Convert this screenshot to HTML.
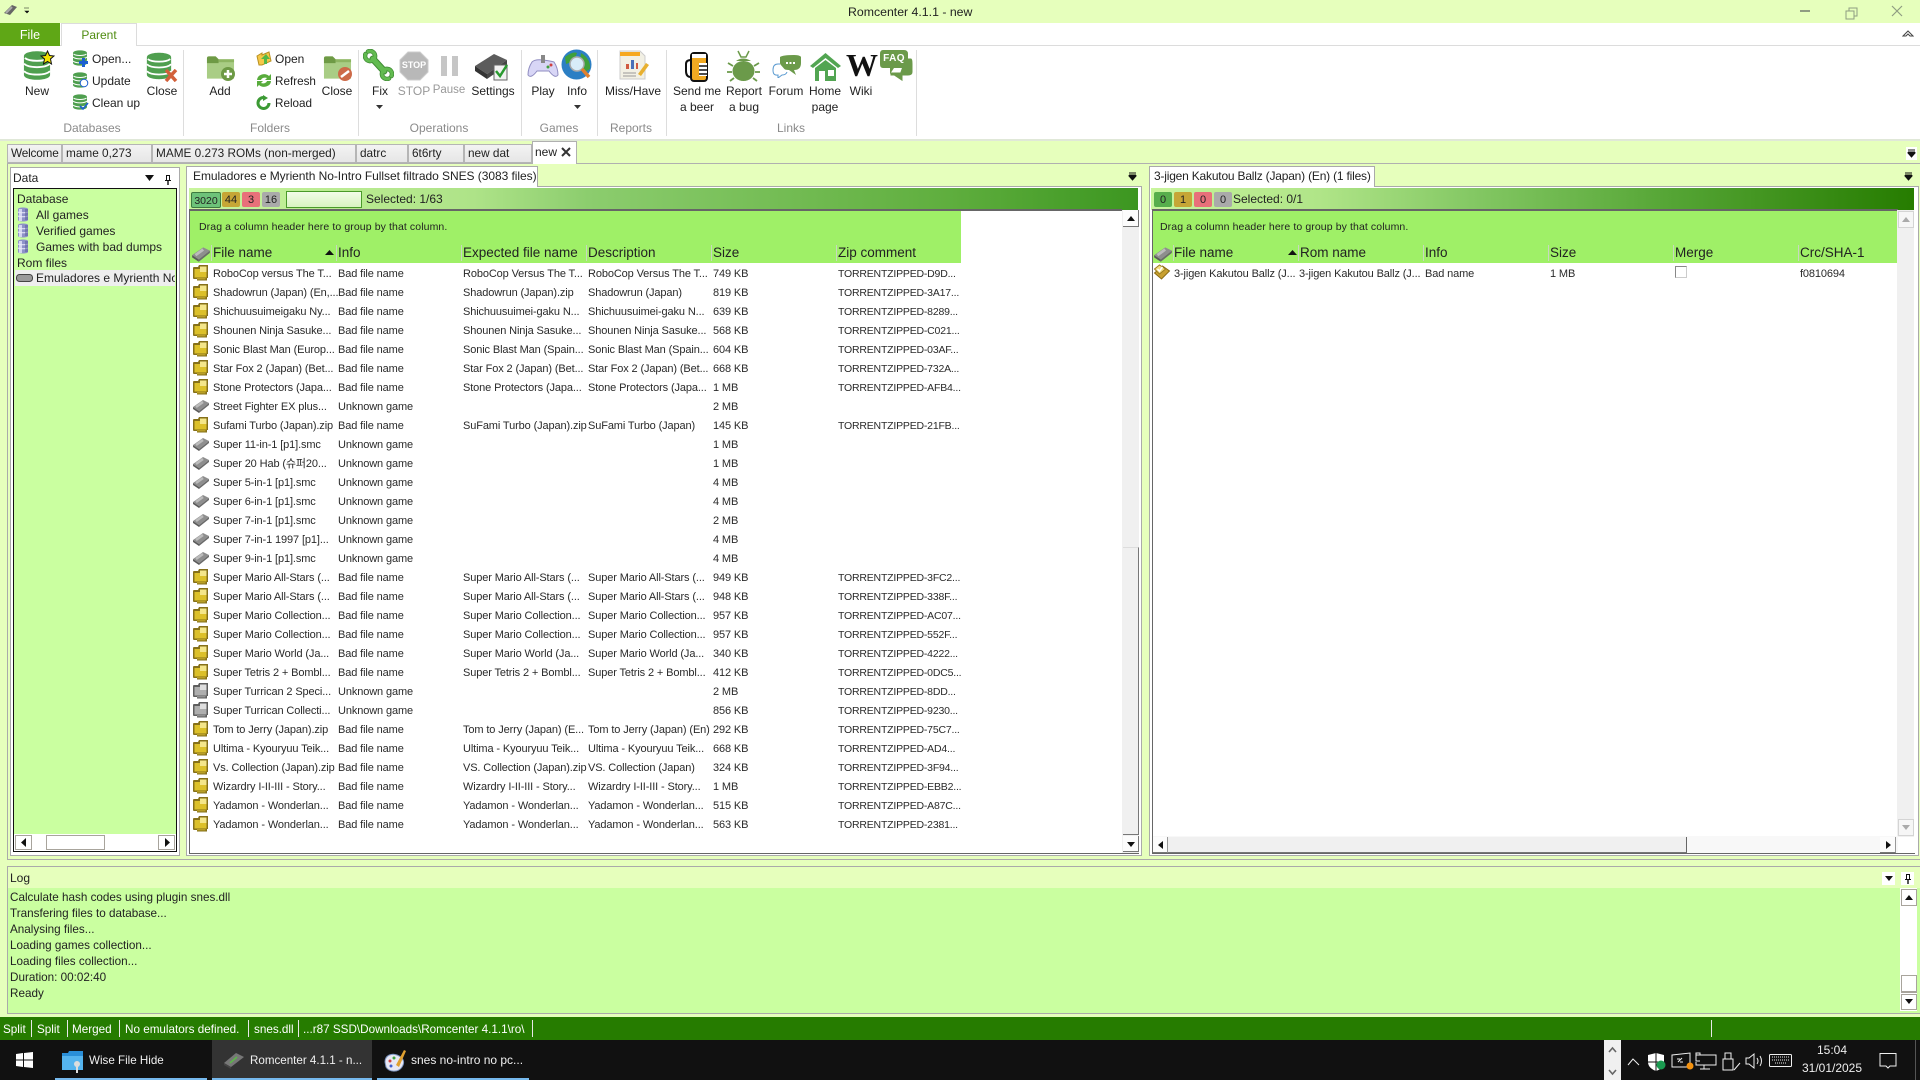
<!DOCTYPE html>
<html><head><meta charset="utf-8"><title>Romcenter 4.1.1 - new</title>
<style>
html,body{margin:0;padding:0;width:1920px;height:1080px;overflow:hidden;background:#e6ffbc}
body{position:relative;font:12px "Liberation Sans","Noto Sans CJK KR",sans-serif;color:#222}
div,span,svg{position:absolute}
.t{white-space:nowrap;line-height:16px;height:16px}
.c{white-space:nowrap;line-height:16px;height:16px;text-align:center}
.g{color:#8a8a8a;font-size:13px}
.sep{width:1px;background:#ddd;top:50px;height:86px}
.r{left:190px;width:770px;height:19px;font-size:11px;letter-spacing:-.12px;color:#2a2a2a}
.r span{top:3px;line-height:16px;white-space:nowrap}
.r svg{left:2px;top:1px;width:18px;height:18px}
.a{left:23px}.b{left:148px}.d{left:273px}.e{left:398px}.h{left:523px}.z{left:648px;font-size:10.5px;letter-spacing:-.2px}
.hd{top:243px;height:20px;background:#9ff067;font-size:13.5px;line-height:19px;white-space:nowrap;color:#222}
.v{width:1px;top:245px;height:16px;background:#c8d8c0}
.tab{top:144px;height:19px;background:linear-gradient(#f3f3f3,#e6e6e6);border:1px solid #b5b5b5;line-height:17px;font-size:11.8px;white-space:nowrap;box-sizing:border-box;padding-left:3px;overflow:hidden}
.bd{top:192px;height:15px;text-align:center;font-size:11px;line-height:17px;color:#222;border-radius:2px}
.sb{background:#fff;border:1px solid #a8a49c;box-sizing:border-box}
.s{color:#fff;top:1022px;font-size:11.7px}
.dv{width:1px;background:#e8e8e8;top:1020px;height:17px}
.tb{color:#f0f0f0;top:1053px;font-size:11.6px}
.tray{fill:none;stroke:#f0f0f0;stroke-width:1}
.lg{font-size:11.7px;left:10px}
</style></head><body>
<svg width="0" height="0" style="position:absolute">
<defs>
<symbol id="db" viewBox="0 0 30 32"><path d="M1 6C1-1 29-1 29 6V26C29 33 1 33 1 26Z" fill="#4f9f4f"/><path d="M2 8C7 12 23 12 28 8M1 14C6 19 24 19 29 14M1 22C6 27 24 27 29 22" stroke="#fff" stroke-width="2" fill="none"/></symbol>
<symbol id="fold" viewBox="0 0 30 26"><path d="M1 3Q1 1 3 1H10L13 4H29V24H1Z" fill="#a9cd85"/><path d="M1 3Q1 1 3 1H10L13 4V8H1Z" fill="#6e9a45"/><path d="M13 4H29V7H13Z" fill="#8db562"/></symbol>
<symbol id="zip" viewBox="0 0 18 18"><path d="M1 4Q1 3 2 3H6L7 1H16V14H15V16.500H5V15H2Q1 15 1 14Z" fill="#85701a"/><path d="M2.500 5H14.500V13.500H2.500Z" fill="#dcc02a"/><path d="M8 2.500H14.500V8H8Z" fill="#f4e68a"/><path d="M5 14H13.500V15.500H5Z" fill="#b89e26"/></symbol>
<symbol id="zipg" viewBox="0 0 18 18"><path d="M1 4Q1 3 2 3H6L7 1H16V14H15V16.500H5V15H2Q1 15 1 14Z" fill="#5e5e5e"/><path d="M2.500 5H14.500V13.500H2.500Z" fill="#aeaeae"/><path d="M8 2.500H14.500V8H8Z" fill="#dedede"/><path d="M5 14H13.500V15.500H5Z" fill="#909090"/></symbol>
<symbol id="chip" viewBox="0 0 18 18"><path d="M1 10L11 3L17 6L7 14Z" fill="#8e8e8e"/><path d="M1 10L7 14V16L1 12Z" fill="#5a5a5a"/><path d="M7 14L17 6V8L7 16Z" fill="#6a6a6a"/><path d="M4 10L11 5" stroke="#bcbcbc" stroke-width="2.500"/></symbol>
<symbol id="cyl" viewBox="0 0 12 15"><path d="M1 2C1 0 11 0 11 2V13C11 15 1 15 1 13Z" fill="#8e92c8"/><path d="M2 2H5V14H2Z" fill="#d4d6f0"/><path d="M1 5C3 6 9 6 11 5M1 9C3 10 9 10 11 9" stroke="#e8e8f8" fill="none"/><path d="M8 2H11V13H8Z" fill="#5f62a0" opacity=".6"/></symbol>
</defs></svg>

<!-- title bar -->
<svg style="left:3px;top:2px" width="26" height="16" viewBox="0 0 26 16"><path d="M1 11L9 3L14 5L7 13Z" fill="#666"/><path d="M3 11L9 5" stroke="#aaa" stroke-width="2"/><path d="M21 6H27M22 9H26L24 11Z" fill="#111" stroke="#111" stroke-width=".6"/></svg>
<div class="t" style="left:848px;top:4px;font-size:12.3px;color:#222">Romcenter 4.1.1 - new</div>
<svg style="left:1795px;top:5px" width="115" height="16" viewBox="0 0 115 16" fill="none" stroke="#8f9c82"><path d="M5 6H15" stroke-width="2"/><path d="M51 6H59V14H51ZM54 6V3H62V11H59"/><path d="M97 1L107 11M107 1L97 11" stroke-width="1.2"/></svg>

<!-- ribbon -->
<div style="left:0;top:23px;width:1920px;height:118px;background:#fff;border-bottom:2px solid #e0e8d8;box-sizing:border-box"></div>
<div style="left:0;top:45px;width:1920px;height:1px;background:#dcdcdc"></div>
<div style="left:0;top:23px;width:60px;height:23px;background:#5fa716;color:#fff;text-align:center;line-height:24px;font-size:12.5px">File</div>
<div style="left:61px;top:23px;width:76px;height:23px;background:#fff;border:1px solid #dcdcdc;border-bottom:0;box-sizing:border-box;color:#4f8c10;text-align:center;line-height:23px;font-size:12px">Parent</div>
<svg style="left:1902px;top:29px" width="12" height="9" viewBox="0 0 12 9" fill="none" stroke="#444"><path d="M1 7L6 2L11 7L8 7L6 5L4 7Z"/></svg>

<svg style="left:23px;top:50px" width="28" height="31"><use href="#db"/></svg>
<svg style="left:40px;top:50px" width="15" height="15" viewBox="0 0 15 15"><path d="M7.5 1L9.5 5.5L14 6L10.5 9L11.5 14L7.5 11.5L3.5 14L4.5 9L1 6L5.500 5.500Z" fill="#f2e300" stroke="#111"/></svg>
<svg style="left:72px;top:50px" width="16" height="16"><use href="#db"/></svg>
<svg style="left:78px;top:57px" width="11" height="11" viewBox="0 0 11 11"><path d="M4 1H7V4H10V7H7V10H4V7H1V4H4Z" fill="#1c5fd0"/></svg>
<svg style="left:72px;top:72px" width="16" height="16"><use href="#db"/></svg>
<svg style="left:79px;top:78px" width="10" height="10" viewBox="0 0 10 10"><circle cx="5" cy="5" r="3.800" fill="#fff" stroke="#1c5fd0"/></svg>
<svg style="left:72px;top:94px" width="16" height="16"><use href="#db"/></svg>
<svg style="left:79px;top:102px" width="10" height="9" viewBox="0 0 10 9"><path d="M1 4L4 7L9 1" stroke="#1c5fd0" stroke-width="1.600" fill="none"/></svg>
<svg style="left:146px;top:50px" width="26" height="32"><use href="#db"/></svg>
<svg style="left:164px;top:69px" width="14" height="13" viewBox="0 0 14 13"><path d="M2 1L12 12M12 1L2 12" stroke="#d2603a" stroke-width="3.500"/></svg>
<svg style="left:206px;top:55px" width="29" height="26"><use href="#fold"/></svg>
<svg style="left:221px;top:67px" width="14" height="14" viewBox="0 0 14 14"><circle cx="7" cy="7" r="7" fill="#6d9a45"/><path d="M7 3V11M3 7H11" stroke="#fff" stroke-width="2.500"/></svg>
<svg style="left:256px;top:51px" width="16" height="15" viewBox="0 0 16 15"><path d="M1 5L6 2V4L13 1L15 10L6 14H3Z" fill="#f6c848" stroke="#b89020"/><path d="M8 13V8H5L10 3L14 8H11V13Z" fill="#54b848"/></svg>
<svg style="left:256px;top:73px" width="16" height="15" viewBox="0 0 16 15" fill="#58ac3c"><path d="M1 7A7 6 0 0 1 13 3L15 1V7H9L11 5A4 3 0 0 0 5 7Z"/><path d="M15 8A7 6 0 0 1 3 12L1 14V8H7L5 10A4 3 0 0 0 11 8Z"/></svg>
<svg style="left:256px;top:95px" width="16" height="15" viewBox="0 0 16 15"><path d="M13 8A5.500 5.500 0 1 1 8 2.500" fill="none" stroke="#3c9a34" stroke-width="3"/><path d="M7 0L12 3L7 6Z" fill="#3c9a34"/></svg>
<svg style="left:323px;top:55px" width="29" height="26"><use href="#fold"/></svg>
<svg style="left:338px;top:67px" width="14" height="14" viewBox="0 0 14 14"><circle cx="7" cy="7" r="7" fill="#cd6a48"/><path d="M3 10L11 4" stroke="#fff" stroke-width="2.500"/></svg>
<svg style="left:363px;top:49px" width="31" height="32" viewBox="0 0 31 32" fill="none" stroke-linecap="round"><path d="M10 10L21 22" stroke="#3f8a34" stroke-width="7"/><path d="M2.500 5A5 5 0 1 0 5 2.500M28.500 27A5 5 0 1 0 26 29.500" stroke="#3f8a34" stroke-width="4.500"/><path d="M10 10L21 22" stroke="#62bb50" stroke-width="5"/><path d="M2.500 5A5 5 0 1 0 5 2.500M28.500 27A5 5 0 1 0 26 29.500" stroke="#62bb50" stroke-width="3"/></svg>
<svg style="left:399px;top:51px" width="30" height="30" viewBox="0 0 30 30"><path d="M9 1H21L29 9V21L21 29H9L1 21V9Z" fill="#b8b8b8" stroke="#ccc"/></svg>
<div style="left:441px;top:56px;width:6px;height:20px;background:#c6c6c6"></div>
<div style="left:452px;top:56px;width:6px;height:20px;background:#c6c6c6"></div>
<svg style="left:474px;top:52px" width="36" height="30" viewBox="0 0 36 30"><path d="M1 14L20 2L33 8L13 22Z" fill="#5c5c5c"/><path d="M1 14L13 22V27L1 19Z" fill="#333"/><path d="M13 22L33 8V13L13 27Z" fill="#444"/><rect x="20" y="13" width="13" height="15" fill="#f2f2f2" stroke="#666"/><path d="M22 19L26 24L33 13" stroke="#2a9a30" stroke-width="2.500" fill="none"/></svg>
<svg style="left:527px;top:53px" width="32" height="26" viewBox="0 0 32 26"><path d="M5 9Q8 6 16 7T27 9Q31 15 31 22Q28 26 22 18H10Q4 26 1 22Q1 15 5 9Z" fill="#d8d6f6" stroke="#8f8cc0"/><circle cx="24" cy="12" r="1.500" fill="#d04040"/><circle cx="21" cy="14" r="1.500" fill="#40a040"/><rect x="14" y="2" width="4" height="8" fill="#888"/></svg>
<svg style="left:561px;top:49px" width="32" height="32" viewBox="0 0 32 32"><circle cx="15.500" cy="15.500" r="15" fill="#2c7fc4"/><path d="M4 8Q12 2 16 4L13 12L5 15ZM20 4Q30 10 29 20L22 24L19 12Z" fill="#3fa03c"/><circle cx="16" cy="15" r="7" fill="#d8ecf8" stroke="#aaa" stroke-width="1.500"/><path d="M21 20L28 28" stroke="#e08030" stroke-width="3.500"/></svg>
<svg style="left:618px;top:50px" width="31" height="31" viewBox="0 0 31 31"><path d="M2 1H22L27 6V29H2Z" fill="#f2f0e4" stroke="#ccc"/><rect x="2" y="2" width="20" height="4" fill="#f6a820"/><path d="M8 19V14H11V19ZM18 19V13H20V19Z" fill="#d05a40"/><rect x="13" y="10" width="3" height="9" fill="#4a70b8"/><path d="M20 24L28 13L31 15L23 26Z" fill="#e8b030"/><path d="M5 23H18M5 26H18" stroke="#999"/></svg>
<svg style="left:685px;top:51px" width="24" height="31" viewBox="0 0 24 31"><rect x="6" y="2" width="16" height="28" rx="3" fill="#f2aa22" stroke="#111" stroke-width="2"/><rect x="7" y="3" width="14" height="4" fill="#fff"/><path d="M1 13Q1 9 6 9V26Q1 26 1 20Z" fill="#fff" stroke="#111" stroke-width="2"/><rect x="14" y="12" width="8" height="13" fill="#fff"/><path d="M14 15H22M14 19H22M14 23H22" stroke="#111" stroke-width="1.500"/></svg>
<svg style="left:727px;top:50px" width="33" height="32" viewBox="0 0 33 32" fill="#6b9a4a"><path d="M11 1L14 7H19L22 1" stroke="#6b9a4a" stroke-width="1.500" fill="none"/><path d="M9 11Q16 6 24 11Z"/><ellipse cx="16.500" cy="21" rx="11" ry="10"/><path d="M6 16L1 13M27 16L32 13M5 22H0M28 22H33M7 28L3 31M26 28L30 31" stroke="#6b9a4a" stroke-width="1.800"/></svg>
<svg style="left:772px;top:55px" width="29" height="23" viewBox="0 0 29 23"><path d="M8 2Q11 0 22 0T29 8Q29 15 22 15L24 20L17 15Q9 15 8 8Z" fill="#6b9a4a"/><path d="M8 9H6Q1 9 1 15T6 20L6 23L10 20Q14 20 15 17" fill="#fff" stroke="#5a9ad0"/><path d="M14 8H23" stroke="#fff" stroke-width="2" stroke-dasharray="2 1.500"/></svg>
<svg style="left:809px;top:52px" width="33" height="29" viewBox="0 0 33 29"><path d="M16.500 1L32 14L29 16L16.500 6L4 16L1 14Z" fill="#52a552"/><path d="M6 16L16.500 8L27 16V29H6Z" fill="#52a552"/><rect x="10" y="19" width="6" height="10" fill="#fff"/><rect x="19" y="18" width="6" height="6" fill="#fff"/></svg>
<div style="left:846px;top:47px;width:32px;font:bold 32px/36px 'Liberation Serif',serif;color:#111;text-align:center">W</div>
<svg style="left:880px;top:50px" width="33" height="32" viewBox="0 0 33 32"><path d="M25 8H31Q33 8 33 14V22Q33 26 28 26H23V32L14 26H10V22H20Z" fill="#6b9a4a" stroke="#fff"/><path d="M3 0H24Q28 0 28 4V14Q28 18 24 18H14L10 24V18H3Q0 18 0 14V4Q0 0 3 0Z" fill="#6b9a4a"/></svg>
<div class="c" style="left:880px;top:52px;width:28px;color:#fff;font:bold 10px/14px 'Liberation Sans',sans-serif;letter-spacing:.4px">FAQ</div>
<div class="c" style="left:399px;top:60px;width:30px;color:#fff;font:bold 9px/11px 'Liberation Sans',sans-serif">STOP</div>

<div class="c" style="left:7px;top:83px;width:60px">New</div>
<div class="t" style="left:92px;top:51px">Open...</div>
<div class="t" style="left:92px;top:73px">Update</div>
<div class="t" style="left:92px;top:95px">Clean up</div>
<div class="c" style="left:132px;top:83px;width:60px">Close</div>
<div class="sep" style="left:183px"></div>
<div class="c" style="left:190px;top:83px;width:60px">Add</div>
<div class="t" style="left:275px;top:51px">Open</div>
<div class="t" style="left:275px;top:74px;font-size:11.7px">Refresh</div>
<div class="t" style="left:275px;top:96px;font-size:11.7px">Reload</div>
<div class="c" style="left:307px;top:83px;width:60px">Close</div>
<div class="sep" style="left:358px"></div>
<div class="c" style="left:350px;top:83px;width:60px">Fix</div>
<svg style="left:376px;top:105px" width="7" height="4"><path d="M0 0H7L3.500 4Z" fill="#333"/></svg>
<div class="c" style="left:384px;top:83px;width:60px;color:#999">STOP</div>
<div class="c" style="left:419px;top:82px;width:60px;color:#999;font-size:11.5px">Pause</div>
<div class="c" style="left:463px;top:83px;width:60px">Settings</div>
<div class="sep" style="left:521px"></div>
<div class="c" style="left:513px;top:83px;width:60px">Play</div>
<div class="c" style="left:547px;top:83px;width:60px">Info</div>
<svg style="left:574px;top:105px" width="7" height="4"><path d="M0 0H7L3.500 4Z" fill="#333"/></svg>
<div class="sep" style="left:597px"></div>
<div class="c" style="left:603px;top:83px;width:60px">Miss/Have</div>
<div class="sep" style="left:666px"></div>
<div class="c" style="left:667px;top:83px;width:60px">Send me</div>
<div class="c" style="left:667px;top:99px;width:60px">a beer</div>
<div class="c" style="left:714px;top:83px;width:60px">Report</div>
<div class="c" style="left:714px;top:99px;width:60px">a bug</div>
<div class="c" style="left:756px;top:83px;width:60px">Forum</div>
<div class="c" style="left:795px;top:83px;width:60px">Home</div>
<div class="c" style="left:795px;top:99px;width:60px">page</div>
<div class="c" style="left:831px;top:83px;width:60px">Wiki</div>
<div class="sep" style="left:916px"></div>
<div class="c g" style="left:42px;top:120px;width:100px;font-size:12px">Databases</div>
<div class="c g" style="left:220px;top:120px;width:100px;font-size:12px">Folders</div>
<div class="c g" style="left:389px;top:120px;width:100px;font-size:12px">Operations</div>
<div class="c g" style="left:509px;top:120px;width:100px;font-size:12px">Games</div>
<div class="c g" style="left:581px;top:120px;width:100px;font-size:12px">Reports</div>
<div class="c g" style="left:741px;top:120px;width:100px;font-size:12px">Links</div>

<!-- doc tabs -->
<div style="left:7px;top:163px;width:1913px;height:1px;background:#b0b0b0"></div>
<div class="tab" style="left:7px;width:55px;padding-left:3px;font-size:11.8px;letter-spacing:-.2px">Welcome</div>
<div class="tab" style="left:62px;width:90px">mame 0,273</div>
<div class="tab" style="left:152px;width:204px">MAME 0.273 ROMs (non-merged)</div>
<div class="tab" style="left:356px;width:52px">datrc</div>
<div class="tab" style="left:408px;width:56px">6t6rty</div>
<div class="tab" style="left:464px;width:68px;padding-left:3px">new dat</div>
<div style="left:532px;top:141px;width:45px;height:23px;background:#fff;border:1px solid #b0b0b0;border-bottom:0;box-sizing:border-box"></div>
<div class="t" style="left:535px;top:144px;font-size:12px">new</div>
<svg style="left:561px;top:147px" width="10" height="10"><path d="M1 1L9 9M9 1L1 9" stroke="#333" stroke-width="2"/></svg>
<div style="left:1906px;top:147px;width:11px;height:13px;background:#fff"></div>
<svg style="left:1907px;top:149px" width="9" height="9"><path d="M1 1H8M1 3H8M1 4H8L4.500 8Z" stroke="#111" fill="#111"/></svg>

<!-- left pane -->
<div style="left:10px;top:167px;width:170px;height:689px;background:#fff;border:1px solid #aaa;box-sizing:border-box"></div>
<div class="t" style="left:13px;top:170px;font-size:12px">Data</div>
<svg style="left:145px;top:175px" width="9" height="6"><path d="M0 0H9L4.500 6Z" fill="#111"/></svg>
<svg style="left:164px;top:174px" width="8" height="11"><path d="M2 1H6V6H7V7H4.700V11H3.300V7H1V6H2ZM3 2V6H5V2Z" fill="#111" fill-rule="evenodd"/></svg>
<div style="left:13px;top:188px;width:164px;height:664px;background:#caffa0;border:1px solid #111;box-sizing:border-box"></div>
<div class="t" style="left:17px;top:191px;font-size:12px">Database</div>
<svg style="left:17px;top:207px" width="12" height="15"><use href="#cyl"/></svg>
<div class="t" style="left:36px;top:207px;font-size:12px">All games</div>
<svg style="left:17px;top:223px" width="12" height="15"><use href="#cyl"/></svg>
<div class="t" style="left:36px;top:223px;font-size:12px">Verified games</div>
<svg style="left:17px;top:239px" width="12" height="15"><use href="#cyl"/></svg>
<div class="t" style="left:36px;top:239px;font-size:12px">Games with bad dumps</div>
<div class="t" style="left:17px;top:255px;font-size:12px">Rom files</div>
<div style="left:15px;top:270px;width:160px;height:16px;background:#eee;overflow:hidden">
<svg style="left:1px;top:3px" width="17" height="10" viewBox="0 0 17 10"><rect x=".5" y="1.500" width="16" height="7" rx="3" fill="#9a9a9a" stroke="#444"/></svg>
<span class="t" style="left:21px;top:0;font-size:12px">Emuladores e Myrienth No-Intro</span></div>
<div style="left:14px;top:834px;width:162px;height:17px;background:#fff"></div>
<div class="sb" style="left:15px;top:835px;width:17px;height:15px"></div>
<svg style="left:21px;top:838px" width="5" height="9"><path d="M5 0V9L0 4.500Z" fill="#111"/></svg>
<div class="sb" style="left:46px;top:835px;width:59px;height:15px"></div>
<div class="sb" style="left:158px;top:835px;width:17px;height:15px"></div>
<svg style="left:165px;top:838px" width="5" height="9"><path d="M0 0V9L5 4.500Z" fill="#111"/></svg>

<!-- centre pane -->
<div style="left:186px;top:186px;width:956px;height:670px;background:#fff;border:1px solid #aaa;box-sizing:border-box"></div>
<div style="left:186px;top:166px;width:352px;height:21px;background:#fff;border:1px solid #aaa;border-bottom:0;box-sizing:border-box"></div>
<div class="t" style="left:193px;top:168px;font-size:12px;letter-spacing:-.05px">Emuladores e Myrienth No-Intro Fullset filtrado SNES (3083 files)</div>
<svg style="left:1128px;top:172px" width="9" height="9"><path d="M1 1H8M1 3H8M1 4H8L4.500 8Z" stroke="#111" fill="#111"/></svg>
<div style="left:189px;top:188px;width:949px;height:22px;background:linear-gradient(90deg,#c8f59c 0%,#aee388 30%,#8ccd6e 42%,#5fae3e 80%,#3c9620 100%)"></div>
<div class="bd" style="left:191px;width:30px;height:16px;background:#6dc279;border:1px solid #3d7a40;box-sizing:border-box;line-height:16px;font-size:10.5px">3020</div>
<div class="bd" style="left:222px;width:18px;background:#c6a636">44</div>
<div class="bd" style="left:242px;width:18px;background:#e8707a">3</div>
<div class="bd" style="left:262px;width:18px;background:#aaa">16</div>
<div style="left:286px;top:191px;width:76px;height:17px;background:linear-gradient(#f2fce8,#d8f4c0);border:1px solid #4a9a2a;box-sizing:border-box"></div>
<div class="t" style="left:366px;top:191px;font-size:12px">Selected: 1/63</div>
<div style="left:189px;top:209px;width:933px;height:644px;border-left:1px solid #666;border-top:2px solid #666;box-sizing:border-box"></div>
<div style="left:190px;top:211px;width:771px;height:32px;background:#9ff067"></div>
<div class="t" style="left:199px;top:219px;font-size:10.500px;letter-spacing:.1px">Drag a column header here to group by that column.</div>
<div class="hd" style="left:190px;width:771px"></div>
<svg style="left:191px;top:244px" width="20" height="20"><use href="#chip"/></svg>
<div class="hd" style="left:213px">File name</div>
<svg style="left:325px;top:250px" width="9" height="5"><path d="M0 5H9L4.500 0Z" fill="#111"/></svg>
<div class="hd" style="left:338px">Info</div>
<div class="hd" style="left:463px">Expected file name</div>
<div class="hd" style="left:588px">Description</div>
<div class="hd" style="left:713px">Size</div>
<div class="hd" style="left:838px">Zip comment</div>
<div class="v" style="left:211px"></div><div class="v" style="left:336px"></div><div class="v" style="left:461px"></div><div class="v" style="left:586px"></div><div class="v" style="left:711px"></div><div class="v" style="left:836px"></div>

<div class="r" style="top:263px"><svg><use href="#zip"/></svg><span class="a">RoboCop versus The T...</span><span class="b">Bad file name</span><span class="d">RoboCop Versus The T...</span><span class="e">RoboCop Versus The T...</span><span class="h">749 KB</span><span class="z">TORRENTZIPPED-D9D...</span></div>
<div class="r" style="top:282px"><svg><use href="#zip"/></svg><span class="a">Shadowrun (Japan) (En,...</span><span class="b">Bad file name</span><span class="d">Shadowrun (Japan).zip</span><span class="e">Shadowrun (Japan)</span><span class="h">819 KB</span><span class="z">TORRENTZIPPED-3A17...</span></div>
<div class="r" style="top:301px"><svg><use href="#zip"/></svg><span class="a">Shichuusuimeigaku Ny...</span><span class="b">Bad file name</span><span class="d">Shichuusuimei-gaku N...</span><span class="e">Shichuusuimei-gaku N...</span><span class="h">639 KB</span><span class="z">TORRENTZIPPED-8289...</span></div>
<div class="r" style="top:320px"><svg><use href="#zip"/></svg><span class="a">Shounen Ninja Sasuke...</span><span class="b">Bad file name</span><span class="d">Shounen Ninja Sasuke...</span><span class="e">Shounen Ninja Sasuke...</span><span class="h">568 KB</span><span class="z">TORRENTZIPPED-C021...</span></div>
<div class="r" style="top:339px"><svg><use href="#zip"/></svg><span class="a">Sonic Blast Man (Europ...</span><span class="b">Bad file name</span><span class="d">Sonic Blast Man (Spain...</span><span class="e">Sonic Blast Man (Spain...</span><span class="h">604 KB</span><span class="z">TORRENTZIPPED-03AF...</span></div>
<div class="r" style="top:358px"><svg><use href="#zip"/></svg><span class="a">Star Fox 2 (Japan) (Bet...</span><span class="b">Bad file name</span><span class="d">Star Fox 2 (Japan) (Bet...</span><span class="e">Star Fox 2 (Japan) (Bet...</span><span class="h">668 KB</span><span class="z">TORRENTZIPPED-732A...</span></div>
<div class="r" style="top:377px"><svg><use href="#zip"/></svg><span class="a">Stone Protectors (Japa...</span><span class="b">Bad file name</span><span class="d">Stone Protectors (Japa...</span><span class="e">Stone Protectors (Japa...</span><span class="h">1 MB</span><span class="z">TORRENTZIPPED-AFB4...</span></div>
<div class="r" style="top:396px"><svg><use href="#chip"/></svg><span class="a">Street Fighter EX plus...</span><span class="b">Unknown game</span><span class="h">2 MB</span></div>
<div class="r" style="top:415px"><svg><use href="#zip"/></svg><span class="a">Sufami Turbo (Japan).zip</span><span class="b">Bad file name</span><span class="d">SuFami Turbo (Japan).zip</span><span class="e">SuFami Turbo (Japan)</span><span class="h">145 KB</span><span class="z">TORRENTZIPPED-21FB...</span></div>
<div class="r" style="top:434px"><svg><use href="#chip"/></svg><span class="a">Super 11-in-1 [p1].smc</span><span class="b">Unknown game</span><span class="h">1 MB</span></div>
<div class="r" style="top:453px"><svg><use href="#chip"/></svg><span class="a">Super 20 Hab (슈퍼20...</span><span class="b">Unknown game</span><span class="h">1 MB</span></div>
<div class="r" style="top:472px"><svg><use href="#chip"/></svg><span class="a">Super 5-in-1 [p1].smc</span><span class="b">Unknown game</span><span class="h">4 MB</span></div>
<div class="r" style="top:491px"><svg><use href="#chip"/></svg><span class="a">Super 6-in-1 [p1].smc</span><span class="b">Unknown game</span><span class="h">4 MB</span></div>
<div class="r" style="top:510px"><svg><use href="#chip"/></svg><span class="a">Super 7-in-1 [p1].smc</span><span class="b">Unknown game</span><span class="h">2 MB</span></div>
<div class="r" style="top:529px"><svg><use href="#chip"/></svg><span class="a">Super 7-in-1 1997 [p1]...</span><span class="b">Unknown game</span><span class="h">4 MB</span></div>
<div class="r" style="top:548px"><svg><use href="#chip"/></svg><span class="a">Super 9-in-1 [p1].smc</span><span class="b">Unknown game</span><span class="h">4 MB</span></div>
<div class="r" style="top:567px"><svg><use href="#zip"/></svg><span class="a">Super Mario All-Stars (...</span><span class="b">Bad file name</span><span class="d">Super Mario All-Stars (...</span><span class="e">Super Mario All-Stars (...</span><span class="h">949 KB</span><span class="z">TORRENTZIPPED-3FC2...</span></div>
<div class="r" style="top:586px"><svg><use href="#zip"/></svg><span class="a">Super Mario All-Stars (...</span><span class="b">Bad file name</span><span class="d">Super Mario All-Stars (...</span><span class="e">Super Mario All-Stars (...</span><span class="h">948 KB</span><span class="z">TORRENTZIPPED-338F...</span></div>
<div class="r" style="top:605px"><svg><use href="#zip"/></svg><span class="a">Super Mario Collection...</span><span class="b">Bad file name</span><span class="d">Super Mario Collection...</span><span class="e">Super Mario Collection...</span><span class="h">957 KB</span><span class="z">TORRENTZIPPED-AC07...</span></div>
<div class="r" style="top:624px"><svg><use href="#zip"/></svg><span class="a">Super Mario Collection...</span><span class="b">Bad file name</span><span class="d">Super Mario Collection...</span><span class="e">Super Mario Collection...</span><span class="h">957 KB</span><span class="z">TORRENTZIPPED-552F...</span></div>
<div class="r" style="top:643px"><svg><use href="#zip"/></svg><span class="a">Super Mario World (Ja...</span><span class="b">Bad file name</span><span class="d">Super Mario World (Ja...</span><span class="e">Super Mario World (Ja...</span><span class="h">340 KB</span><span class="z">TORRENTZIPPED-4222...</span></div>
<div class="r" style="top:662px"><svg><use href="#zip"/></svg><span class="a">Super Tetris 2 + Bombl...</span><span class="b">Bad file name</span><span class="d">Super Tetris 2 + Bombl...</span><span class="e">Super Tetris 2 + Bombl...</span><span class="h">412 KB</span><span class="z">TORRENTZIPPED-0DC5...</span></div>
<div class="r" style="top:681px"><svg><use href="#zipg"/></svg><span class="a">Super Turrican 2 Speci...</span><span class="b">Unknown game</span><span class="h">2 MB</span><span class="z">TORRENTZIPPED-8DD...</span></div>
<div class="r" style="top:700px"><svg><use href="#zipg"/></svg><span class="a">Super Turrican Collecti...</span><span class="b">Unknown game</span><span class="h">856 KB</span><span class="z">TORRENTZIPPED-9230...</span></div>
<div class="r" style="top:719px"><svg><use href="#zip"/></svg><span class="a">Tom to Jerry (Japan).zip</span><span class="b">Bad file name</span><span class="d">Tom to Jerry (Japan) (E...</span><span class="e">Tom to Jerry (Japan) (En)</span><span class="h">292 KB</span><span class="z">TORRENTZIPPED-75C7...</span></div>
<div class="r" style="top:738px"><svg><use href="#zip"/></svg><span class="a">Ultima - Kyouryuu Teik...</span><span class="b">Bad file name</span><span class="d">Ultima - Kyouryuu Teik...</span><span class="e">Ultima - Kyouryuu Teik...</span><span class="h">668 KB</span><span class="z">TORRENTZIPPED-AD4...</span></div>
<div class="r" style="top:757px"><svg><use href="#zip"/></svg><span class="a">Vs. Collection (Japan).zip</span><span class="b">Bad file name</span><span class="d">VS. Collection (Japan).zip</span><span class="e">VS. Collection (Japan)</span><span class="h">324 KB</span><span class="z">TORRENTZIPPED-3F94...</span></div>
<div class="r" style="top:776px"><svg><use href="#zip"/></svg><span class="a">Wizardry I-II-III - Story...</span><span class="b">Bad file name</span><span class="d">Wizardry I-II-III - Story...</span><span class="e">Wizardry I-II-III - Story...</span><span class="h">1 MB</span><span class="z">TORRENTZIPPED-EBB2...</span></div>
<div class="r" style="top:795px"><svg><use href="#zip"/></svg><span class="a">Yadamon - Wonderlan...</span><span class="b">Bad file name</span><span class="d">Yadamon - Wonderlan...</span><span class="e">Yadamon - Wonderlan...</span><span class="h">515 KB</span><span class="z">TORRENTZIPPED-A87C...</span></div>
<div class="r" style="top:814px"><svg><use href="#zip"/></svg><span class="a">Yadamon - Wonderlan...</span><span class="b">Bad file name</span><span class="d">Yadamon - Wonderlan...</span><span class="e">Yadamon - Wonderlan...</span><span class="h">563 KB</span><span class="z">TORRENTZIPPED-2381...</span></div>

<!-- centre scrollbar -->
<div style="left:1122px;top:210px;width:17px;height:643px;background:#f0f0f0"></div>
<div style="left:1123px;top:210px;width:16px;height:17px;background:#fcfcfc;border-right:1px solid #777;border-bottom:1px solid #777;box-sizing:border-box"></div>
<svg style="left:1127px;top:216px" width="8" height="5"><path d="M0 5H8L4 0Z" fill="#111"/></svg>
<div style="left:1123px;top:547px;width:16px;height:288px;background:#f0f0f0;border-top:1px solid #ddd;border-right:1px solid #777;border-bottom:1px solid #777;box-sizing:border-box"></div>
<div style="left:1123px;top:836px;width:16px;height:16px;background:#fcfcfc;border-right:1px solid #777;border-bottom:1px solid #777;box-sizing:border-box"></div>
<svg style="left:1127px;top:842px" width="8" height="5"><path d="M0 0H8L4 5Z" fill="#111"/></svg>
<div style="left:189px;top:853px;width:950px;height:1px;background:#666"></div>

<!-- right pane -->
<div style="left:1149px;top:186px;width:770px;height:670px;background:#fff;border:1px solid #aaa;box-sizing:border-box"></div>
<div style="left:1149px;top:166px;width:226px;height:21px;background:#fff;border:1px solid #aaa;border-bottom:0;box-sizing:border-box"></div>
<div class="t" style="left:1154px;top:168px;font-size:12px;letter-spacing:-.2px">3-jigen Kakutou Ballz (Japan) (En) (1 files)</div>
<svg style="left:1904px;top:172px" width="9" height="9"><path d="M1 1H8M1 3H8M1 4H8L4.500 8Z" stroke="#111" fill="#111"/></svg>
<div style="left:1151px;top:188px;width:763px;height:22px;background:linear-gradient(90deg,#c8f59c 0%,#b0e588 22%,#84c864 42%,#55a535 68%,#267c00 100%)"></div>
<div class="bd" style="left:1154px;width:18px;background:#57ae4c">0</div>
<div class="bd" style="left:1174px;width:18px;background:#c6a636">1</div>
<div class="bd" style="left:1194px;width:18px;background:#e8707a">0</div>
<div class="bd" style="left:1214px;width:18px;background:#aaa">0</div>
<div class="t" style="left:1233px;top:191px;font-size:12px">Selected: 0/1</div>
<div style="left:1152px;top:209px;width:746px;height:644px;border-left:1px solid #666;border-top:2px solid #666;box-sizing:border-box"></div>
<div style="left:1153px;top:211px;width:744px;height:32px;background:#9ff067"></div>
<div class="t" style="left:1160px;top:219px;font-size:10.500px;letter-spacing:.1px">Drag a column header here to group by that column.</div>
<div class="hd" style="left:1153px;width:744px"></div>
<svg style="left:1153px;top:244px" width="20" height="20"><use href="#chip"/></svg>
<div class="hd" style="left:1174px">File name</div>
<svg style="left:1288px;top:250px" width="9" height="5"><path d="M0 5H9L4.500 0Z" fill="#111"/></svg>
<div class="hd" style="left:1300px">Rom name</div>
<div class="hd" style="left:1425px">Info</div>
<div class="hd" style="left:1550px">Size</div>
<div class="hd" style="left:1675px">Merge</div>
<div class="hd" style="left:1800px">Crc/SHA-1</div>
<div class="v" style="left:1173px"></div><div class="v" style="left:1298px"></div><div class="v" style="left:1423px"></div><div class="v" style="left:1548px"></div><div class="v" style="left:1673px"></div><div class="v" style="left:1798px"></div>
<div class="r" style="left:1153px;top:263px;width:744px">
<svg style="left:0;top:1px;width:18px;height:17px" viewBox="0 0 17 17"><path d="M1 9L9 2L16 7L8 15Z" fill="#c8a030" stroke="#8a6c14"/><path d="M1 5L6 1L12 5L6 10Z" fill="#f2dc80" stroke="#9a7c20"/><path d="M4 5L6 7L9 3" stroke="#fff" stroke-width="1.500" fill="none"/></svg>
<span style="left:21px">3-jigen Kakutou Ballz (J...</span><span style="left:146px">3-jigen Kakutou Ballz (J...</span><span style="left:272px">Bad name</span><span style="left:397px">1 MB</span><span style="left:647px">f0810694</span></div>
<div style="left:1675px;top:266px;width:12px;height:12px;background:#fff;border:1px solid #888;border-right-color:#ccc;border-bottom-color:#ccc;box-sizing:border-box"></div>
<div style="left:1897px;top:210px;width:17px;height:627px;background:#f0f0f0"></div>
<div style="left:1898px;top:211px;width:16px;height:17px;background:#f6f6f6;border:1px solid #d4d4d4;box-sizing:border-box"></div>
<svg style="left:1902px;top:217px" width="8" height="5"><path d="M0 5H8L4 0Z" fill="#aaa"/></svg>
<div style="left:1898px;top:819px;width:16px;height:17px;background:#f6f6f6;border:1px solid #d4d4d4;box-sizing:border-box"></div>
<svg style="left:1902px;top:825px" width="8" height="5"><path d="M0 0H8L4 5Z" fill="#aaa"/></svg>
<div style="left:1153px;top:836px;width:745px;height:17px;background:#f8f8f8"></div>
<div style="left:1153px;top:837px;width:15px;height:16px;background:#fcfcfc;border-right:1px solid #999;border-bottom:1px solid #777;box-sizing:border-box"></div>
<svg style="left:1158px;top:841px" width="5" height="8"><path d="M5 0V8L0 4Z" fill="#111"/></svg>
<div style="left:1168px;top:837px;width:519px;height:16px;background:#f0f0f0;border-right:1px solid #666;border-bottom:1px solid #777;box-sizing:border-box"></div>
<div style="left:1880px;top:837px;width:16px;height:16px;background:#fcfcfc;border-right:1px solid #999;border-bottom:1px solid #777;box-sizing:border-box"></div>
<svg style="left:1886px;top:841px" width="5" height="8"><path d="M0 0V8L5 4Z" fill="#111"/></svg>
<div style="left:1152px;top:853px;width:763px;height:1px;background:#666"></div>

<!-- separators & log -->
<div style="left:7px;top:164px;width:1px;height:696px;background:#aaa"></div>
<div style="left:7px;top:859px;width:1913px;height:1px;background:#aaa"></div>
<div style="left:7px;top:866px;width:1913px;height:148px;background:#e6ffbc;border:1px solid #aaa;border-right:0;box-sizing:border-box"></div>
<div style="left:8px;top:888px;width:1912px;height:125px;background:#caffa0"></div>
<div class="t" style="left:10px;top:870px;font-size:12px">Log</div>
<div style="left:1882px;top:872px;width:13px;height:13px;background:#fff"></div>
<svg style="left:1885px;top:876px" width="8" height="5"><path d="M0 0H8L4 5Z" fill="#111"/></svg>
<div style="left:1901px;top:872px;width:13px;height:13px;background:#fff"></div>
<svg style="left:1904px;top:873px" width="8" height="11"><path d="M2 1H6V6H7V7H4.700V11H3.300V7H1V6H2ZM3 2V6H5V2Z" fill="#111" fill-rule="evenodd"/></svg>
<div class="t lg" style="top:890px">Calculate hash codes using plugin snes.dll</div>
<div class="t lg" style="top:906px">Transfering files to database...</div>
<div class="t lg" style="top:922px">Analysing files...</div>
<div class="t lg" style="top:938px">Loading games collection...</div>
<div class="t lg" style="top:954px">Loading files collection...</div>
<div class="t lg" style="top:970px">Duration: 00:02:40</div>
<div class="t lg" style="top:986px">Ready</div>
<div style="left:1900px;top:888px;width:17px;height:123px;background:#fff"></div>
<div class="sb" style="left:1901px;top:889px;width:16px;height:17px"></div>
<svg style="left:1905px;top:895px" width="8" height="5"><path d="M0 5H8L4 0Z" fill="#111"/></svg>
<div class="sb" style="left:1901px;top:975px;width:16px;height:18px;border-bottom:2px solid #a8a49c"></div>
<div class="sb" style="left:1901px;top:994px;width:16px;height:16px"></div>
<svg style="left:1905px;top:999px" width="8" height="5"><path d="M0 0H8L4 5Z" fill="#111"/></svg>

<!-- status bar -->
<div style="left:0;top:1017px;width:1920px;height:23px;background:#267c00"></div>
<div class="t s" style="left:3px">Split</div><div class="dv" style="left:31px"></div>
<div class="t s" style="left:37px">Split</div><div class="dv" style="left:67px"></div>
<div class="t s" style="left:72px">Merged</div><div class="dv" style="left:119px"></div>
<div class="t s" style="left:125px">No emulators defined.</div><div class="dv" style="left:248px"></div>
<div class="t s" style="left:254px">snes.dll</div><div class="dv" style="left:298px"></div>
<div class="t s" style="left:303px">...r87 SSD\Downloads\Romcenter 4.1.1\ro\</div><div class="dv" style="left:532px"></div>
<div class="dv" style="left:1711px"></div>

<!-- taskbar -->
<div style="left:0;top:1040px;width:1920px;height:40px;background:#111"></div>
<svg style="left:16px;top:1052px" width="17" height="16" viewBox="0 0 17 16" fill="#fff"><path d="M0 2L7 1V7.500H0ZM8 1L17 0V7.500H8ZM0 8.500H7V15L0 14ZM8 8.500H17V16L8 15Z"/></svg>
<div style="left:55px;top:1078px;width:152px;height:2px;background:#76b9ed"></div>
<svg style="left:61px;top:1050px" width="24" height="24" viewBox="0 0 24 24"><path d="M1 3H7L8 1H22V20H1Z" fill="#2a8fd8"/><path d="M1 6H22V20H1Z" fill="#55b4ee"/><circle cx="16" cy="14" r="3" fill="#ddd"/><rect x="15" y="15" width="2" height="8" fill="#ddd"/></svg>
<div class="t tb" style="left:89px">Wise File Hide</div>
<div style="left:212px;top:1040px;width:160px;height:40px;background:#333"></div>
<div style="left:212px;top:1078px;width:160px;height:2px;background:#76b9ed"></div>
<svg style="left:222px;top:1050px" width="24" height="20" viewBox="0 0 24 20"><path d="M2 13L14 3L22 7L9 17Z" fill="#777"/><path d="M2 13L9 17V19L2 15Z" fill="#444"/><path d="M8 13L15 7" stroke="#5cb848" stroke-width="1.500"/></svg>
<div class="t tb" style="left:250px">Romcenter 4.1.1 - n...</div>
<div style="left:377px;top:1078px;width:152px;height:2px;background:#76b9ed"></div>
<svg style="left:384px;top:1047px" width="24" height="26" viewBox="0 0 24 26"><path d="M1 15C1 8 8 6 13 8S22 14 18 20 5 25 2 20Z" fill="#e8e8f4" stroke="#7c94c0"/><circle cx="6" cy="14" r="1.500" fill="#d04040"/><circle cx="10" cy="11" r="1.500" fill="#40a040"/><circle cx="7" cy="19" r="1.500" fill="#4060d0"/><path d="M12 18L20 3L22 4L15 20Z" fill="#e0a030"/></svg>
<div class="t tb" style="left:411px;top:1052px;font-size:12px">snes no-intro no pc...</div>

<!-- tray -->
<div style="left:1604px;top:1040px;width:17px;height:40px;background:#f0f0f0"></div>
<svg style="left:1607px;top:1046px" width="11" height="30" viewBox="0 0 11 30" fill="none" stroke="#666" stroke-width="1.600"><path d="M2 6L5.500 2L9 6M2 24L5.500 28L9 24"/></svg>
<svg style="left:1627px;top:1050px" width="250" height="22" viewBox="0 0 250 22">
<path class="tray" d="M1 15L6 9L12 15"/>
<path d="M21 5L29 3L37 5V12Q37 18 29 21Q21 18 21 12Z" fill="#fff"/><path d="M29 3V21M21 12H37" stroke="#111"/><circle cx="34" cy="15" r="4.500" fill="#1a9a50"/>
<g transform="translate(-2 0)"><path class="tray" d="M47 5L65 3V17H47ZM53 12L57 8M52 9H55M58 12H55"/><circle cx="65" cy="16" r="3.500" fill="#f4920e"/></g>
<g transform="translate(-7 0)"><path class="tray" d="M76 5H80V3H76V11H80M80 5H96V15H76V12M84 15V19M80 19H90"/></g>
<g transform="translate(-10 0)"><path class="tray" d="M106 9H116V20H106ZM108 3H114V9H108ZM117 20L123 13"/></g>
<g transform="translate(-7 0)"><path class="tray" d="M126 8H129L134 4V18L129 14H126ZM137 8Q139 11 137 14M140 6Q143 11 140 16"/></g>
<g transform="translate(-5 0)"><rect class="tray" x="147.500" y="4.500" width="22" height="12" rx="1"/><path d="M150 7H167M150 10H167M153 13H164" stroke="#f0f0f0" stroke-dasharray="1 1"/></g>
</svg>
<div class="c" style="left:1792px;top:1042px;width:80px;color:#eee;font-size:12px">15:04</div>
<div class="c" style="left:1792px;top:1060px;width:80px;color:#eee;font-size:12px">31/01/2025</div>
<svg style="left:1878px;top:1051px" width="20" height="20" viewBox="0 0 20 20" fill="none" stroke="#f0f0f0"><path d="M2 2.500H18V15H12L10 17L8 15H2Z"/></svg>
<div style="left:1915px;top:1040px;width:1px;height:40px;background:#555"></div>
</body></html>
